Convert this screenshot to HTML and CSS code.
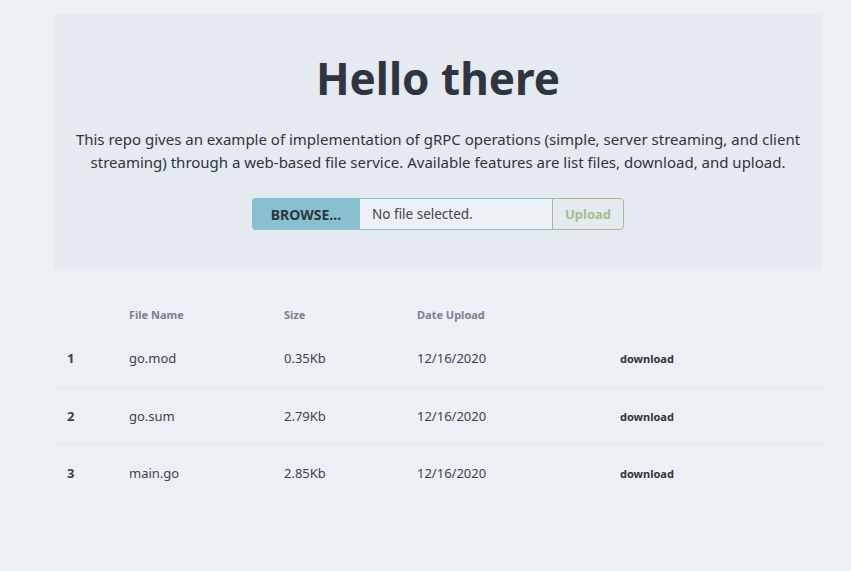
FILE: index.html
```html
<!DOCTYPE html>
<html lang="en">
<head>
<meta charset="utf-8">
<title>gRPC File Service</title>
<link rel="stylesheet" href="styles.css">
</head>
<body>
<div class="page">
  <section class="hero">
    <h1 class="title">Hello there</h1>
    <p class="lead">This repo gives an example of implementation of gRPC operations (simple, server streaming, and client streaming) through a web-based file service. Available features are list files, download, and upload.</p>
    <form class="upload-form">
      <label class="browse">BROWSE…</label>
      <span class="filename">No file selected.</span>
      <button type="button" class="upload-btn">Upload</button>
    </form>
  </section>
  <table class="files">
    <thead>
      <tr><th class="c-idx"></th><th class="c-name">File Name</th><th class="c-size">Size</th><th class="c-date">Date Upload</th><th class="c-act"></th></tr>
    </thead>
    <tbody>
      <tr><td class="idx">1</td><td>go.mod</td><td>0.35Kb</td><td>12/16/2020</td><td><a class="dl">download</a></td></tr>
      <tr><td class="idx">2</td><td>go.sum</td><td>2.79Kb</td><td>12/16/2020</td><td><a class="dl">download</a></td></tr>
      <tr><td class="idx">3</td><td>main.go</td><td>2.85Kb</td><td>12/16/2020</td><td><a class="dl">download</a></td></tr>
    </tbody>
  </table>
</div>
</body>
</html>
```

FILE: styles.css
```css
* { box-sizing: border-box; }
html, body { margin: 0; padding: 0; }
body {
  background: #eceff4;
  color: #2e3440;
  font-family: "Noto Sans", "Open Sans", sans-serif;
}
.page {
  width: 768px;
  margin-left: 54px;
  padding-top: 14px;
}
.hero {
  background: #e5e9f0;
  height: 255px;
  padding: 30px 10px 0;
  text-align: center;
}
.title {
  margin: 0;
  font-size: 44px;
  line-height: 68px;
  font-weight: 700;
  color: #2e3440;
}
.lead {
  margin: 16px 0 0;
  font-size: 15px;
  line-height: 23px;
  color: #2e3440;
}
.upload-form {
  display: flex;
  justify-content: center;
  margin-top: 24px;
  height: 32px;
}
.browse {
  width: 108px;
  background: #88c0d0;
  border-radius: 4px 0 0 4px;
  font-size: 14px;
  font-weight: 700;
  color: #2e3440;
  display: flex;
  align-items: center;
  justify-content: center;
}
.filename {
  width: 192px;
  background: #eceff4;
  border: 1px solid #88c0d0;
  border-left: 0;
  border-right: 0;
  font-size: 13.5px;
  color: #3b4252;
  display: flex;
  align-items: center;
  padding-left: 12px;
  text-align: left;
}
.upload-btn {
  width: 72px;
  background: #e5e9f0;
  border: 1px solid #a3be8c;
  border-radius: 0 4px 4px 0;
  font-family: inherit;
  font-size: 13px;
  font-weight: 700;
  color: #a3be8c;
  padding: 0;
}
.files {
  width: 768px;
  margin-top: 29px;
  border-collapse: collapse;
  table-layout: fixed;
}
.files th {
  height: 32px;
  padding: 0;
  text-align: left;
  font-size: 11px;
  font-weight: 700;
  color: #7b8190;
}
.c-idx { width: 75px; }
.c-name { width: 155px; }
.c-size { width: 133px; }
.c-date { width: 203px; }
.files td {
  height: 57px;
  padding: 0;
  font-size: 13px;
  color: #3b4252;
}
.files tbody tr + tr { border-top: 1px solid #e1e5ec; }
.files td.idx {
  padding-left: 13px;
  font-weight: 700;
}
.dl {
  font-size: 11px;
  font-weight: 700;
  color: #2e3440;
  text-decoration: none;
}
```
